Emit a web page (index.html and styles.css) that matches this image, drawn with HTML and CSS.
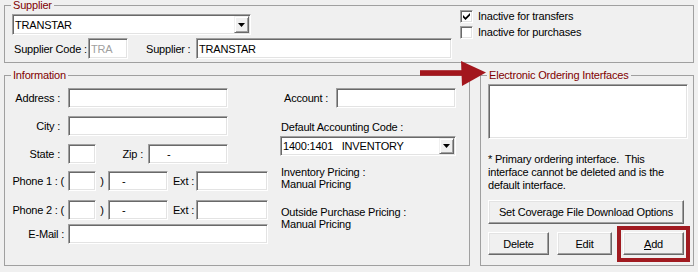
FILE: index.html
```html
<!DOCTYPE html>
<html>
<head>
<meta charset="utf-8">
<title>Supplier</title>
<link rel="stylesheet" href="styles.css">
</head>
<body>
<div class="page">
  <fieldset class="group supplier">
    <legend>Supplier</legend>
    <div class="sup-body">
      <div class="sup-left">
        <div class="combo combo-sup">
          <span class="combo-text">TRANSTAR</span>
          <span class="combo-btn"><svg width="7" height="4" viewBox="0 0 7 4"><polygon points="0,0 7,0 3.5,4" fill="#000"/></svg></span>
        </div>
        <div class="sup-row">
          <span class="lbl lbl-code">Supplier Code :</span>
          <span class="edit edit-code">TRA</span>
          <span class="lbl lbl-sup">Supplier :</span>
          <span class="edit edit-sup">TRANSTAR</span>
        </div>
      </div>
      <div class="sup-checks">
        <div class="check-row">
          <span class="check"><svg width="7" height="7" viewBox="0 0 7 7"><path d="M0 2 L2.5 4.5 L7 0 L7 2.6 L2.5 7 L0 4.6 Z" fill="#000"/></svg></span>
          <span>Inactive for transfers</span>
        </div>
        <div class="check-row">
          <span class="check"></span>
          <span>Inactive for purchases</span>
        </div>
      </div>
    </div>
  </fieldset>

  <div class="lower">
    <fieldset class="group info">
      <legend>Information</legend>
      <div class="info-body">
        <div class="info-left">
          <div class="frow r-addr">
            <span class="flabel">Address :</span>
            <span class="edit w160"></span>
          </div>
          <div class="frow r-city">
            <span class="flabel">City :</span>
            <span class="edit w160"></span>
          </div>
          <div class="frow r-state">
            <span class="flabel">State :</span>
            <span class="edit w28"></span>
            <span class="zip-lbl">Zip :</span>
            <span class="edit w80"><span class="mask-zip">-</span></span>
          </div>
          <div class="frow r-ph1">
            <span class="flabel wide">Phone 1 : (</span>
            <span class="edit w28"></span>
            <span class="paren">)</span>
            <span class="edit w60"><span class="mask-ph">-</span></span>
            <span class="ext-lbl">Ext :</span>
            <span class="edit w72"></span>
          </div>
          <div class="frow r-ph2">
            <span class="flabel wide">Phone 2 : (</span>
            <span class="edit w28"></span>
            <span class="paren">)</span>
            <span class="edit w60"><span class="mask-ph">-</span></span>
            <span class="ext-lbl">Ext :</span>
            <span class="edit w72"></span>
          </div>
          <div class="frow r-mail">
            <span class="flabel wide">E-Mail :</span>
            <span class="edit w200"></span>
          </div>
        </div>
        <div class="info-right">
          <div class="frow r-addr">
            <span class="acct-lbl">Account :</span>
            <span class="edit w120"></span>
          </div>
          <div class="dac-lbl">Default Accounting Code :</div>
          <div class="combo combo-dac">
            <span class="combo-text">1400:1401   INVENTORY</span>
            <span class="combo-btn"><svg width="7" height="4" viewBox="0 0 7 4"><polygon points="0,0 7,0 3.5,4" fill="#000"/></svg></span>
          </div>
          <div class="pricing">Inventory Pricing :<br>Manual Pricing</div>
          <div class="pricing pricing-2">Outside Purchase Pricing :<br>Manual Pricing</div>
        </div>
      </div>
    </fieldset>

    <fieldset class="group eoi">
      <legend>Electronic Ordering Interfaces</legend>
      <div class="eoi-body">
        <div class="listbox"></div>
        <div class="note">* Primary ordering interface.  This<br>interface cannot be deleted and is the<br>default interface.</div>
        <div class="btn btn-wide">Set Coverage File Download Options</div>
        <div class="btn-row">
          <div class="btn btn-del">Delete</div>
          <div class="btn btn-edit">Edit</div>
          <div class="add-wrap">
            <div class="btn btn-add"><u>A</u>dd</div>
            <div class="highlight"></div>
          </div>
        </div>
      </div>
    </fieldset>
  </div>

  <svg class="arrow" width="70" height="30" viewBox="0 0 70 30">
    <rect x="2" y="12.2" width="46" height="5.6" fill="#a3161d"/>
    <polygon points="43,3 68,14.6 44,28" fill="#a3161d"/>
  </svg>
</div>
</body>
</html>
```

FILE: styles.css
```css
* {
  box-sizing: border-box;
}

html,
body {
  margin: 0;
  padding: 0;
}

body {
  background: #f0f0f0;
  font-family: "Liberation Sans", Arial, sans-serif;
  font-size: 11px;
  letter-spacing: -0.2px;
  color: #000;
  width: 698px;
  height: 272px;
  overflow: hidden;
}

.page {
  position: relative;
  width: 698px;
  height: 272px;
}

/* group boxes */
.group {
  margin: 0;
  padding: 0;
  border: 1px solid #a0a0a0;
  min-width: 0;
}

.group > legend {
  margin-left: 6px;
  padding: 0 2px;
  color: #800000;
  line-height: 11px;
  height: 11px;
}

.supplier {
  margin-left: 4px;
  width: 690px;
  height: 63px;
}

/* sunken edit */
.edit,
.combo,
.listbox,
.check {
  background: #fff;
  border-style: solid;
  border-width: 1px;
  border-color: #a0a0a0 #fff #fff #a0a0a0;
  box-shadow: inset 1px 1px 0 #696969, inset -1px -1px 0 #e3e3e3;
}

.edit {
  display: flex;
  align-items: center;
  height: 20px;
  padding-left: 2px;
  white-space: pre;
  overflow: hidden;
  flex-shrink: 0;
}

.combo {
  display: flex;
  align-items: stretch;
}

.combo-text {
  flex: 1;
  display: flex;
  align-items: center;
  padding-left: 2px;
  white-space: pre;
}

.combo-btn {
  width: 15px;
  margin: 1px;
  display: flex;
  align-items: center;
  justify-content: center;
  background: #f0f0f0;
  border: 1px solid;
  border-color: #f0f0f0 #696969 #696969 #f0f0f0;
  box-shadow: inset 1px 1px 0 #fff, inset -1px -1px 0 #a0a0a0;
}

.combo-btn svg {
  display: block;
}

/* supplier */
.sup-body {
  display: flex;
  align-items: flex-start;
  padding-left: 7px;
}

.sup-left {
  width: 440px;
  margin-top: 3px;
}

.combo-sup {
  width: 239px;
  height: 21px;
}

.sup-row {
  display: flex;
  align-items: center;
  margin-top: 3px;
}

.lbl {
  white-space: pre;
  flex-shrink: 0;
}

.lbl-code {
  width: 76px;
  padding-left: 2px;
}

.lbl-sup {
  width: 68px;
  padding-left: 18px;
}

.edit-code {
  width: 40px;
  height: 21px;
  color: #a0a0a0;
}

.edit-sup {
  width: 256px;
  height: 21px;
}

.sup-checks {
  margin-left: 8px;
  margin-top: -1px;
}

.check-row {
  display: flex;
  align-items: flex-start;
  height: 16px;
  line-height: 13px;
}

.check {
  width: 13px;
  height: 13px;
  margin-right: 5px;
  flex-shrink: 0;
}

.check svg {
  display: block;
  margin: 2px 0 0 2px;
}

/* lower area */
.lower {
  display: flex;
  margin-top: 7px;
  margin-left: 4px;
}

.info {
  width: 466px;
  height: 196px;
}

.eoi {
  width: 214px;
  height: 196px;
  margin-left: 10px;
}

.info-body {
  display: flex;
  align-items: flex-start;
}

.info-left {
  width: 275px;
}

.info-right {
  width: 185px;
}

.frow {
  display: flex;
  align-items: center;
  height: 20px;
}

.r-addr { margin-top: 7px; }
.r-city { margin-top: 8px; }
.r-state { margin-top: 8px; }
.r-ph1 { margin-top: 7px; }
.r-ph2 { margin-top: 9px; }
.r-mail { margin-top: 4px; }

.flabel {
  width: 55px;
  margin-right: 8px;
  text-align: right;
  white-space: pre;
  flex-shrink: 0;
}

.flabel.wide {
  width: 59px;
  margin-right: 4px;
}

.w28 { width: 28px; }
.w60 { width: 60px; }
.w72 { width: 72px; }
.w80 { width: 80px; }
.w120 { width: 120px; }
.w160 { width: 160px; }
.w200 { width: 200px; }

.zip-lbl {
  width: 52px;
  padding-right: 5px;
  text-align: right;
  white-space: pre;
}

.mask-zip {
  padding-left: 16px;
}

.mask-ph {
  padding-left: 11px;
}

.paren {
  width: 12px;
  text-align: center;
}

.ext-lbl {
  width: 28px;
  padding-right: 2px;
  text-align: right;
  white-space: pre;
}

.acct-lbl {
  width: 56px;
  padding-left: 4px;
  white-space: pre;
}

.dac-lbl {
  margin-top: 13px;
  line-height: 13px;
  padding-left: 1px;
  white-space: pre;
}

.combo-dac {
  margin-top: 2px;
  width: 176px;
  height: 20px;
}

.pricing {
  margin-top: 10px;
  line-height: 12px;
  padding-left: 1px;
}

.pricing-2 {
  margin-top: 16px;
}

/* EOI */
.eoi-body {
  padding-left: 7px;
}

.listbox {
  margin-top: 3px;
  width: 200px;
  height: 55px;
}

.note {
  margin-top: 14px;
  line-height: 13px;
  white-space: pre;
}

.btn {
  display: flex;
  align-items: center;
  justify-content: center;
  background: #f0f0f0;
  border: 1px solid;
  border-color: #fff #696969 #696969 #fff;
  box-shadow: inset -1px -1px 0 #a0a0a0, inset 1px 1px 0 #e3e3e3;
  white-space: pre;
}

.btn-wide {
  margin-top: 8px;
  width: 196px;
  height: 24px;
}

.btn-row {
  display: flex;
  margin-top: 8px;
}

.btn-del {
  width: 61px;
  height: 23px;
}

.btn-edit {
  width: 55px;
  height: 23px;
  margin-left: 8px;
}

.add-wrap {
  position: relative;
  margin-left: 11px;
}

.btn-add {
  width: 61px;
  height: 23px;
}

.highlight {
  position: absolute;
  left: -6px;
  top: -6px;
  right: -6px;
  bottom: -7px;
  border: 4px solid #a01a20;
}

.arrow {
  position: absolute;
  left: 418px;
  top: 58px;
  display: block;
}
```
